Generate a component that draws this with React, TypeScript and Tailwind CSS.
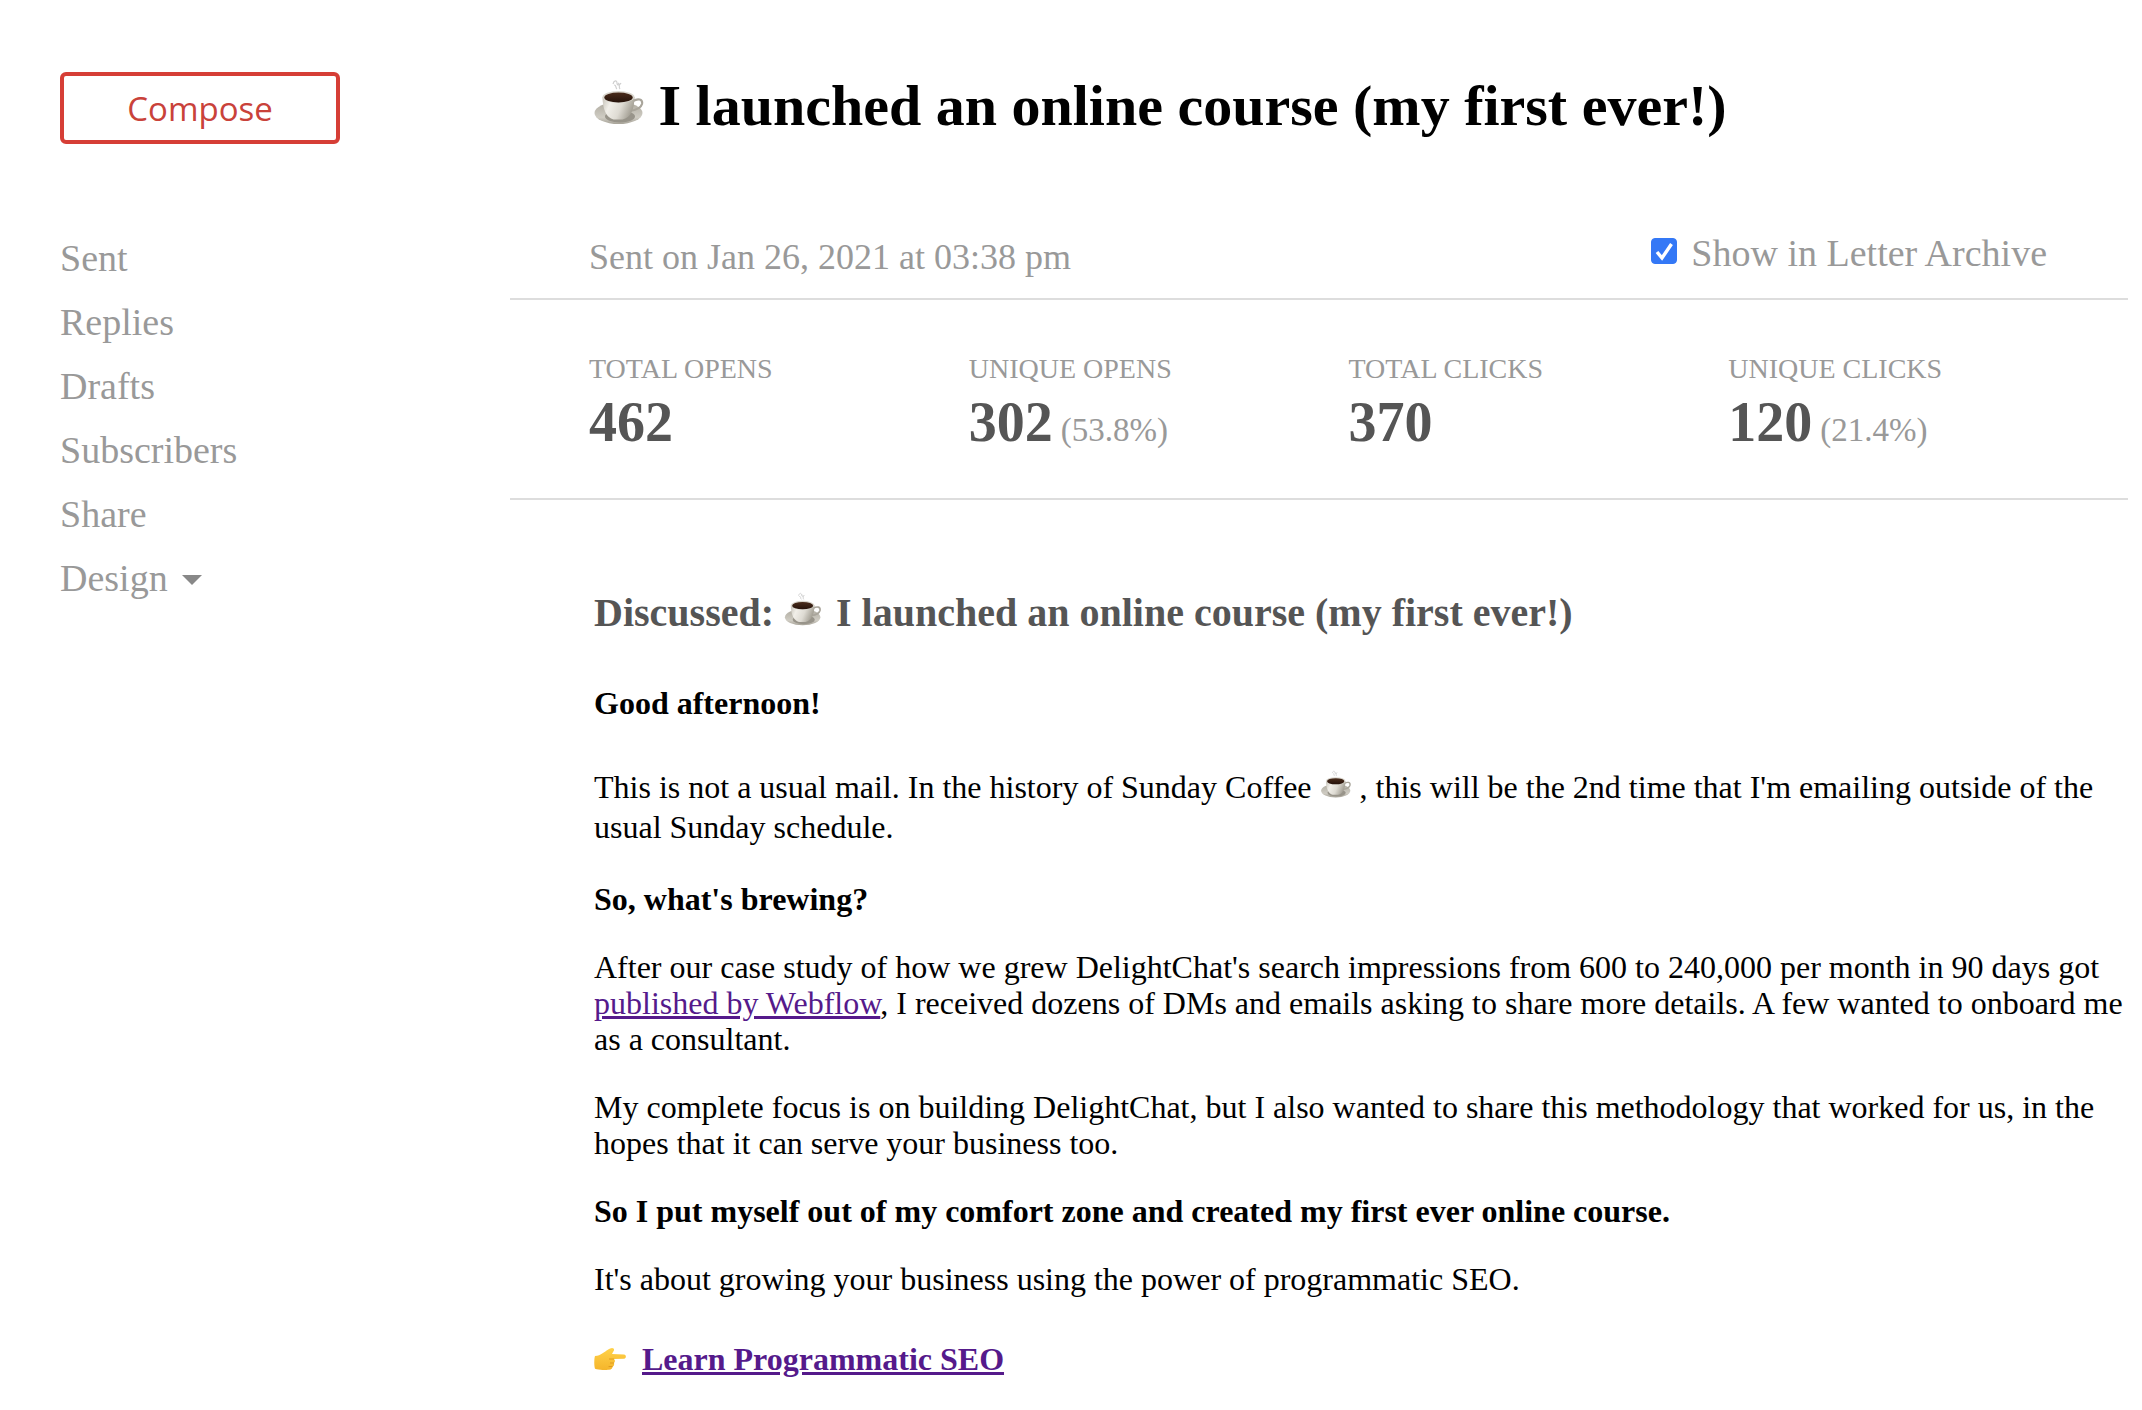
import { useId, useState } from 'react';

const navItems = ['Sent', 'Replies', 'Drafts', 'Subscribers', 'Share'];

const stats = [
  { label: 'TOTAL OPENS', value: '462' },
  { label: 'UNIQUE OPENS', value: '302', percent: '(53.8%)' },
  { label: 'TOTAL CLICKS', value: '370' },
  { label: 'UNIQUE CLICKS', value: '120', percent: '(21.4%)' },
];

function Coffee({ className }: { className: string }) {
  const id = useId();
  return (
    <svg viewBox="0 0 50 46" className={className} role="img" aria-label="coffee">
      <defs>
        <linearGradient id={`${id}cup`} x1="0" x2="1" y1="0" y2="0.3">
          <stop offset="0" stopColor="#c4c0b6" />
          <stop offset="0.3" stopColor="#f1efe9" />
          <stop offset="0.65" stopColor="#dedbd3" />
          <stop offset="1" stopColor="#a5a196" />
        </linearGradient>
        <linearGradient id={`${id}plate`} x1="0" x2="0" y1="0" y2="1">
          <stop offset="0" stopColor="#aeaa9f" />
          <stop offset="0.7" stopColor="#cfccc3" />
          <stop offset="1" stopColor="#a8a499" />
        </linearGradient>
        <linearGradient id={`${id}coffee`} x1="0" x2="0" y1="0" y2="1">
          <stop offset="0" stopColor="#4a2c1b" />
          <stop offset="1" stopColor="#25120a" />
        </linearGradient>
      </defs>
      <path d="M19 5c1-4 4-4 4-1s3 2 4 0M20 6c3 0 1 3 3 4M24 4c3 1 0 4 2 6" fill="none" stroke="#cfcfcf" strokeWidth="1.2" />
      <ellipse cx="24.5" cy="34" rx="24" ry="11" fill={`url(#${id}plate)`} />
      <ellipse cx="26" cy="37.5" rx="15" ry="6" fill="#98948a" />
      <path d="M39 22c5-3 10-2 9 3-1 4-6 6-12 7" fill="none" stroke="#a9a59b" strokeWidth="2.2" />
      <path d="M8.5 18c0 12 4 21 11 22.5h9c8-1.5 12-10.5 12-22.5z" fill={`url(#${id}cup)`} />
      <ellipse cx="24.5" cy="18" rx="16" ry="6" fill="#d9d6ce" />
      <ellipse cx="24.5" cy="18.5" rx="14.2" ry="5" fill={`url(#${id}coffee)`} />
    </svg>
  );
}

function PointingHand({ className }: { className: string }) {
  const id = useId();
  return (
    <svg viewBox="0 0 32 24" className={className} role="img" aria-label="pointing right">
      <defs>
        <linearGradient id={id} x1="0" x2="0" y1="0" y2="1">
          <stop offset="0" stopColor="#ffd24a" />
          <stop offset="1" stopColor="#f5b52b" />
        </linearGradient>
      </defs>
      <path
        d="M1 10c3 0 5-1 8-3 3-2 7-5 9-5s3 2 1 4l-1 2 12 .5c2.5 0 2.5 4 0 4.2L20 13c1.5 1.5 1 3 0 4 .5 2-.3 3-1.4 3.500 0 2-1.200 3-3.600 3.300-4 .5-10 .3-14-1C0 20 0 13 1 10z"
        fill={`url(#${id})`}
      />
      <path d="M20 13h-5M20 17h-4M18.600 20.500h-4" stroke="#d9921b" strokeWidth="0.8" fill="none" />
    </svg>
  );
}

function Sidebar() {
  return (
    <aside className="w-[510px] shrink-0 pl-[60px] pt-[72px]">
      <button className="h-[72px] w-[280px] rounded-md border-4 border-[#d63e36] font-['Open_Sans',sans-serif] text-[33px] leading-none text-[#c9423a]">
        Compose
      </button>
      <nav className="mt-[82px]">
        <ul className="text-[38px] leading-[64px] text-[#999]">
          {navItems.map((item) => (
            <li key={item}>
              <a href="#">{item}</a>
            </li>
          ))}
          <li>
            <button className="flex items-center gap-3.5">
              Design
              <svg viewBox="0 0 20 10" className="mt-1 h-2.5 w-5" aria-hidden="true">
                <path d="M0 0h20L10 10z" fill="#888" />
              </svg>
            </button>
          </li>
        </ul>
      </nav>
    </aside>
  );
}

function Letter() {
  return (
    <article className="pl-[84px] pt-[87px] text-[32px] leading-[36px]">
      <h2 className="text-[40px] font-bold leading-[52px] text-[#555]">
        Discussed: <Coffee className="mr-1 inline-block h-[34px] w-[38px] align-baseline" />{' '}
        I launched an online course (my first ever!)
      </h2>
      <p className="mt-[46px] font-bold">Good afternoon!</p>
      <p className="mt-[46px] leading-[40px]">
        This is not a usual mail. In the history of Sunday Coffee{' '}
        <Coffee className="inline-block h-7 w-8 align-baseline" /> , this will be the 2nd time that
        I'm emailing outside of the usual Sunday schedule.
      </p>
      <p className="mt-[34px] font-bold">So, what's brewing?</p>
      <p className="mt-8">
        After our case study of how we grew DelightChat's search impressions from 600 to 240,000 per
        month in 90 days got{' '}
        <a href="#" className="text-[#551a8b] underline">published by Webflow</a>, I received dozens
        of DMs and emails asking to share more details. A few wanted to onboard me as a consultant.
      </p>
      <p className="mt-8">
        My complete focus is on building DelightChat, but I also wanted to share this methodology that
        worked for us, in the hopes that it can serve your business too.
      </p>
      <p className="mt-8 font-bold">
        So I put myself out of my comfort zone and created my first ever online course.
      </p>
      <p className="mt-8">It's about growing your business using the power of programmatic SEO.</p>
      <p className="mt-[42px] font-bold leading-[40px]">
        <PointingHand className="mr-4 inline-block h-6 w-8 align-baseline" />
        <a href="#" className="text-[#551a8b] underline">Learn Programmatic SEO</a>
      </p>
    </article>
  );
}

export default function App() {
  const [inArchive, setInArchive] = useState(true);

  return (
    <div className="flex min-h-screen bg-white font-['Liberation_Serif',serif] text-black">
      <Sidebar />
      <main className="min-w-0 flex-1 pb-4 pr-3.5 pt-[72px]">
        <h1 className="pl-[84px] text-[58px] font-bold leading-[68px]">
          <Coffee className="inline-block h-[46px] w-[50px] align-baseline" /> I launched an online
          course (my first ever!)
        </h1>

        <div className="mt-[91px] flex items-center justify-between border-b-2 border-[#ddd] pb-[15px] pl-[79px] pr-[81px] text-[#999]">
          <p className="text-[36px] leading-[52px]">Sent on Jan 26, 2021 at 03:38 pm</p>
          <label className="flex items-start gap-3.5 pb-2 text-[38px] leading-[44px]">
            <span className="mt-[7px] grid size-[26px]">
              <input
                type="checkbox"
                checked={inArchive}
                onChange={(e) => setInArchive(e.target.checked)}
                className="col-start-1 row-start-1 size-[26px] appearance-none rounded border border-[#999] checked:border-[#3478f6] checked:bg-[#3478f6]"
              />
              {inArchive && (
                <svg viewBox="0 0 26 26" className="pointer-events-none col-start-1 row-start-1 size-[26px]" aria-hidden="true">
                  <path d="M6 14l5 6L20.5 6" fill="none" stroke="#fff" strokeWidth="3.4" />
                </svg>
              )}
            </span>
            Show in Letter Archive
          </label>
        </div>

        <dl className="grid grid-cols-4 border-b-2 border-[#ddd] pb-[34px] pl-[79px] pr-5 pt-[51px]">
          {stats.map((stat) => (
            <div key={stat.label}>
              <dt className="text-[28px] leading-[36px] text-[#999]">{stat.label}</dt>
              <dd className="pt-px text-[56px] font-bold leading-[68px] text-[#555]">
                {stat.value}
                {stat.percent && (
                  <span className="ml-2 text-[33px] font-normal text-[#999]">{stat.percent}</span>
                )}
              </dd>
            </div>
          ))}
        </dl>

        <Letter />
      </main>
    </div>
  );
}
